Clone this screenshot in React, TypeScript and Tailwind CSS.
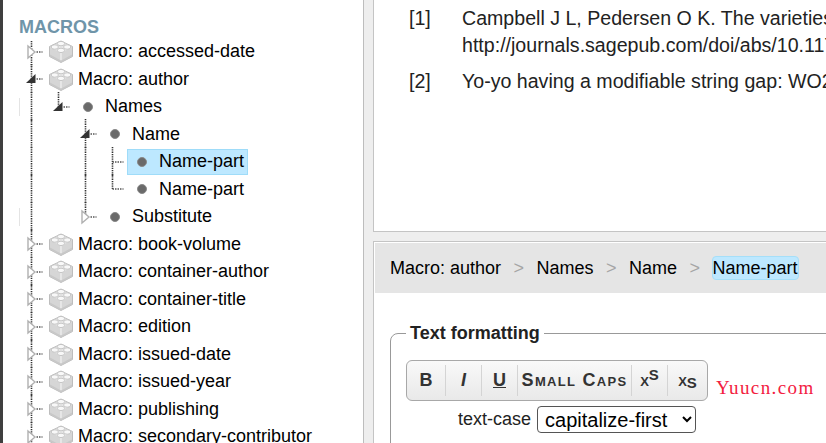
import React from "react";

type Row = {
  label: string;
  depth: number;
  kind: "cube" | "dot";
  toggle?: "open" | "closed";
  stubs?: number[];
  fulls?: number[];
  selected?: boolean;
  faint?: boolean;
};

const macro = (label: string, toggle: "open" | "closed" = "closed"): Row => ({
  label: "Macro: " + label,
  depth: 0,
  kind: "cube",
  toggle,
});

const rows: Row[] = [
  macro("accessed-date"),
  macro("author", "open"),
  { label: "Names", depth: 1, kind: "dot", toggle: "open", stubs: [1], faint: true },
  { label: "Name", depth: 2, kind: "dot", toggle: "open", fulls: [2] },
  { label: "Name-part", depth: 3, kind: "dot", fulls: [2, 3], selected: true },
  { label: "Name-part", depth: 3, kind: "dot", fulls: [2], stubs: [3] },
  { label: "Substitute", depth: 2, kind: "dot", toggle: "closed", stubs: [2], faint: true },
  macro("book-volume"),
  macro("container-author"),
  macro("container-title"),
  macro("edition"),
  macro("issued-date"),
  macro("issued-year"),
  macro("publishing"),
  macro("secondary-contributor"),
];

const lx = (d: number) => 11.5 + 27 * d;

function Gutter({ row, first }: { row: Row; first: boolean }) {
  const width = 26 + 27 * row.depth;
  const cx = lx(row.depth);
  return (
    <svg width={width} height={28} viewBox={`0 0 ${width} 28`} className="shrink-0 overflow-visible">
      {row.faint && <path d="M-0.5 5V23" stroke="#e4e4e4" strokeWidth="1" />}
      <path d={`M11.5 ${first ? 3 : -1}V29`} stroke="#333" strokeWidth="1.6" strokeDasharray="1.3 1" fill="none" />
      {(row.fulls ?? []).map((d) => (
        <path key={d} d={`M${lx(d)} -1V29`} stroke="#333" strokeWidth="1.6" strokeDasharray="1.3 1" fill="none" />
      ))}
      {(row.stubs ?? []).map((d) => (
        <path key={d} d={`M${lx(d)} -1V14`} stroke="#333" strokeWidth="1.6" strokeDasharray="1.3 1" fill="none" />
      ))}
      <path d={`M${cx + 5} 14H${cx + 11}`} stroke="#555" strokeWidth="1.3" strokeDasharray="1.5 1" fill="none" />
      {row.depth === 3 && <path d={`M${cx} 14H${cx + 5}`} stroke="#555" strokeWidth="1.3" strokeDasharray="1.5 1" fill="none" />}
      {row.toggle === "closed" && (
        <path d={`M${cx - 3.5} 8L${cx + 3.5} 14L${cx - 3.5} 20Z`} fill="#fff" stroke="#b0b0b0" strokeWidth="1.4" />
      )}
      {row.toggle === "open" && <path d={`M${cx + 4} 9V18H${cx - 5.5}Z`} fill="#333" />}
    </svg>
  );
}

function Cube() {
  return (
    <svg width="24" height="23" viewBox="0 0 24 23" className="shrink-0">
      <path d="M12 1L23.5 6.5V16.5L12 22.5L0.5 16.5V6.5Z" fill="#d6d6d6" stroke="#bdbdbd" strokeWidth="1" />
      <path d="M1 7L12 13L23 7L12 1.5Z" fill="#e6e6e6" />
      <path d="M12 13V22" stroke="#f2f2f2" strokeWidth="1.2" />
      <path d="M1 14.5L12 20.5L23 14.5V16.5L12 22.5L1 16.5Z" fill="#c8c8c8" />
      <ellipse cx="12" cy="3.6" rx="3.6" ry="2.2" fill="#f8f8f8" stroke="#bcbcbc" strokeWidth="0.8" />
      <ellipse cx="5.8" cy="7" rx="3.6" ry="2.2" fill="#f8f8f8" stroke="#bcbcbc" strokeWidth="0.8" />
      <ellipse cx="18.2" cy="7" rx="3.6" ry="2.2" fill="#f8f8f8" stroke="#bcbcbc" strokeWidth="0.8" />
      <ellipse cx="12" cy="10.4" rx="3.6" ry="2.2" fill="#f8f8f8" stroke="#bcbcbc" strokeWidth="0.8" />
    </svg>
  );
}

function Dot() {
  return (
    <span className="w-[24px] shrink-0 flex items-center justify-center">
      <span className="w-[10px] h-[10px] rounded-full bg-[#6a6a6a] border border-[#8a8a8a]" />
    </span>
  );
}

function TreeRow({ row, first }: { row: Row; first: boolean }) {
  const tone = row.selected ? "bg-[#bde8ff] border-[#9fdcf9]" : "border-transparent";
  return (
    <div className="flex items-center h-[27.5px] whitespace-nowrap text-black">
      <Gutter row={row} first={first} />
      <div className={`flex items-center h-[26px] pl-[2px] pr-[3px] gap-[5px] border ${tone}`}>
        {row.kind === "cube" ? <Cube /> : <Dot />}
        <span>{row.label}</span>
      </div>
    </div>
  );
}

const sep = "border-r border-[#d4d4d4]";

export default function App() {
  const crumbs = ["Macro: author", "Names", "Name"];
  return (
    <div
      className="flex w-[826px] h-[443px] overflow-hidden bg-[#eeeeee] text-[18px] leading-[27px]"
      style={{ fontFamily: '"Liberation Sans", Arial, sans-serif' }}
    >
      <div className="w-[3px] shrink-0 bg-[#3f3f3f]" />
      <div className="w-[361px] shrink-0 bg-white border-r border-[#bdbdbd] pl-[17px] pt-[16px] overflow-hidden">
        <div className="font-bold text-[#6f95a9] h-[22px] leading-[22px] -ml-[1px]">MACROS</div>
        {rows.map((r, i) => (
          <TreeRow key={i} row={r} first={i === 0} />
        ))}
      </div>
      <div className="ml-[9px] flex-1 min-w-0 flex flex-col gap-[9px]">
        <div className="h-[232px] shrink-0 bg-white border-l border-b border-[#c4c4c4] pl-[35px] overflow-hidden whitespace-nowrap text-[#222] text-[19.6px]">
          <div className="flex mt-[5px]">
            <div className="w-[53px] shrink-0">[1]</div>
            <div>
              <div>Campbell J L, Pedersen O K. The varieties of</div>
              <div>http://journals.sagepub.com/doi/abs/10.1177/0000</div>
            </div>
          </div>
          <div className="flex mt-[9px]">
            <div className="w-[53px] shrink-0">[2]</div>
            <div>Yo-yo having a modifiable string gap: WO2000000</div>
          </div>
        </div>
        <div className="flex-1 min-h-0 relative bg-white border-l border-t border-[#c4c4c4] pl-[1px] pt-[1px]">
          <div className="h-[50px] bg-[#e5e5e5] flex items-center pl-[15px] text-black whitespace-nowrap">
            {crumbs.map((c) => (
              <React.Fragment key={c}>
                <span>{c}</span>
                <span className="w-[35.5px] text-center text-[#a5a5a5]">&gt;</span>
              </React.Fragment>
            ))}
            <span className="-ml-[1px] h-[24px] leading-[22px] rounded-[4px] bg-[#bde8ff] border border-[#a5dff9]">Name-part</span>
          </div>
          <fieldset className="ml-[15px] mt-[30px] -mr-[40px] h-[145px] border border-[#999] rounded-tl-[8px] pl-[15px] pt-[1px]">
            <legend className="font-bold px-[4px] text-[#222] leading-[20px]">Text formatting</legend>
            <div className="flex w-[302px] h-[41px] mt-[16px] border border-[#a8a8a8] rounded-[6px] bg-gradient-to-b from-[#f9f9f9] to-[#e9e9e9] text-[#333] font-bold text-[18px]">
              <div className="flex items-center w-[302px] my-[4px]">
                <span className={`w-[39px] h-full flex items-center justify-center ${sep}`}>B</span>
                <span className={`w-[36px] h-full flex items-center justify-center italic ${sep}`}>I</span>
                <span className={`w-[36px] h-full flex items-center justify-center underline ${sep}`}>U</span>
                <span className={`w-[114px] h-full flex items-center justify-center tracking-[1.3px] [font-variant:small-caps] ${sep}`}>Small Caps</span>
                <span className={`w-[36px] h-full flex items-center justify-center [font-variant:small-caps] ${sep}`}>
                  x<sup className="text-[15px] leading-none -top-[6px] relative align-baseline">S</sup>
                </span>
                <span className="w-[39px] h-full flex items-center justify-center [font-variant:small-caps]">
                  x<sub className="text-[15px] leading-none relative -bottom-[2px] align-baseline">S</sub>
                </span>
              </div>
            </div>
            <div className="flex items-center h-[27px] mt-[5px] pl-[52px] gap-[6px] text-[#222]">
              <label>text-case</label>
              <select
                defaultValue="capitalize-first"
                className="w-[159px] h-[27px] bg-white border border-[#555] rounded-[4px] pl-[3px] text-[20px] leading-[25px] text-black"
              >
                <option>capitalize-first</option>
              </select>
            </div>
          </fieldset>
          <div
            className="absolute left-[342px] top-[134px] text-[19px] leading-[24px] tracking-[1.4px] text-[#f3203f] whitespace-nowrap"
            style={{ fontFamily: '"Liberation Serif", serif' }}
          >
            Yuucn.com
          </div>
        </div>
      </div>
    </div>
  );
}
